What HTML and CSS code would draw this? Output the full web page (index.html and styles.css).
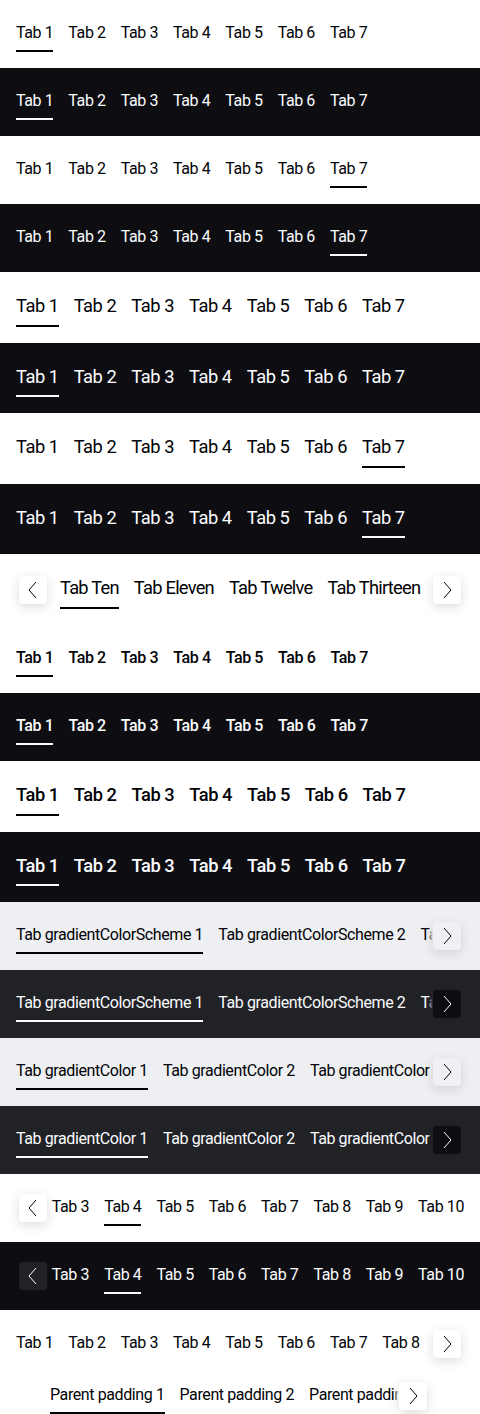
FILE: index.html
```html
<!DOCTYPE html>
<html lang="en">
<head>
<meta charset="utf-8">
<title>Tabs Bar</title>
<link rel="stylesheet" href="styles.css">
</head>
<body>

<!-- small -->
<div class="story theme-light">
  <div class="tabs-bar"><div class="scroller">
    <button class="tab active">Tab 1</button><button class="tab">Tab 2</button><button class="tab">Tab 3</button><button class="tab">Tab 4</button><button class="tab">Tab 5</button><button class="tab">Tab 6</button><button class="tab">Tab 7</button>
  </div></div>
</div>
<div class="story theme-dark">
  <div class="tabs-bar"><div class="scroller">
    <button class="tab active">Tab 1</button><button class="tab">Tab 2</button><button class="tab">Tab 3</button><button class="tab">Tab 4</button><button class="tab">Tab 5</button><button class="tab">Tab 6</button><button class="tab">Tab 7</button>
  </div></div>
</div>
<div class="story theme-light">
  <div class="tabs-bar"><div class="scroller">
    <button class="tab">Tab 1</button><button class="tab">Tab 2</button><button class="tab">Tab 3</button><button class="tab">Tab 4</button><button class="tab">Tab 5</button><button class="tab">Tab 6</button><button class="tab active">Tab 7</button>
  </div></div>
</div>
<div class="story theme-dark">
  <div class="tabs-bar"><div class="scroller">
    <button class="tab">Tab 1</button><button class="tab">Tab 2</button><button class="tab">Tab 3</button><button class="tab">Tab 4</button><button class="tab">Tab 5</button><button class="tab">Tab 6</button><button class="tab active">Tab 7</button>
  </div></div>
</div>

<!-- medium -->
<div class="story theme-light size-medium">
  <div class="tabs-bar"><div class="scroller">
    <button class="tab active">Tab 1</button><button class="tab">Tab 2</button><button class="tab">Tab 3</button><button class="tab">Tab 4</button><button class="tab">Tab 5</button><button class="tab">Tab 6</button><button class="tab">Tab 7</button>
  </div></div>
</div>
<div class="story theme-dark size-medium">
  <div class="tabs-bar"><div class="scroller">
    <button class="tab active">Tab 1</button><button class="tab">Tab 2</button><button class="tab">Tab 3</button><button class="tab">Tab 4</button><button class="tab">Tab 5</button><button class="tab">Tab 6</button><button class="tab">Tab 7</button>
  </div></div>
</div>
<div class="story theme-light size-medium">
  <div class="tabs-bar"><div class="scroller">
    <button class="tab">Tab 1</button><button class="tab">Tab 2</button><button class="tab">Tab 3</button><button class="tab">Tab 4</button><button class="tab">Tab 5</button><button class="tab">Tab 6</button><button class="tab active">Tab 7</button>
  </div></div>
</div>
<div class="story theme-dark size-medium">
  <div class="tabs-bar"><div class="scroller">
    <button class="tab">Tab 1</button><button class="tab">Tab 2</button><button class="tab">Tab 3</button><button class="tab">Tab 4</button><button class="tab">Tab 5</button><button class="tab">Tab 6</button><button class="tab active">Tab 7</button>
  </div></div>
</div>

<!-- scrolling medium -->
<div class="story theme-light size-medium">
  <div class="tabs-bar">
    <div class="scroller scrolled-mid tight">
      <button class="tab active">Tab Ten</button><button class="tab">Tab Eleven</button><button class="tab">Tab Twelve</button><button class="tab">Tab Thirteen</button>
    </div>
    <div class="nav nav-prev"><button class="nav-btn" aria-label="Previous"><svg width="28" height="28" viewBox="0 0 28 28"><path d="M17 6 L10 14 L17 22" fill="none" stroke="currentColor" stroke-width="1"/></svg></button></div>
    <div class="nav nav-next"><button class="nav-btn" aria-label="Next"><svg width="28" height="28" viewBox="0 0 28 28"><path d="M11 6 L18 14 L11 22" fill="none" stroke="currentColor" stroke-width="1"/></svg></button></div>
  </div>
</div>

<!-- semibold small -->
<div class="story theme-light weight-semibold">
  <div class="tabs-bar"><div class="scroller">
    <button class="tab active">Tab 1</button><button class="tab">Tab 2</button><button class="tab">Tab 3</button><button class="tab">Tab 4</button><button class="tab">Tab 5</button><button class="tab">Tab 6</button><button class="tab">Tab 7</button>
  </div></div>
</div>
<div class="story theme-dark weight-semibold">
  <div class="tabs-bar"><div class="scroller">
    <button class="tab active">Tab 1</button><button class="tab">Tab 2</button><button class="tab">Tab 3</button><button class="tab">Tab 4</button><button class="tab">Tab 5</button><button class="tab">Tab 6</button><button class="tab">Tab 7</button>
  </div></div>
</div>
<!-- semibold medium -->
<div class="story theme-light weight-semibold size-medium">
  <div class="tabs-bar"><div class="scroller">
    <button class="tab active">Tab 1</button><button class="tab">Tab 2</button><button class="tab">Tab 3</button><button class="tab">Tab 4</button><button class="tab">Tab 5</button><button class="tab">Tab 6</button><button class="tab">Tab 7</button>
  </div></div>
</div>
<div class="story theme-dark weight-semibold size-medium">
  <div class="tabs-bar"><div class="scroller">
    <button class="tab active">Tab 1</button><button class="tab">Tab 2</button><button class="tab">Tab 3</button><button class="tab">Tab 4</button><button class="tab">Tab 5</button><button class="tab">Tab 6</button><button class="tab">Tab 7</button>
  </div></div>
</div>

<!-- gradient color scheme -->
<div class="story theme-surface-light">
  <div class="tabs-bar">
    <div class="scroller">
      <button class="tab active">Tab gradientColorScheme 1</button><button class="tab">Tab gradientColorScheme 2</button><button class="tab">Tab gradientColorScheme 3</button>
    </div>
    <div class="nav nav-next"><button class="nav-btn" aria-label="Next"><svg width="28" height="28" viewBox="0 0 28 28"><path d="M11 6 L18 14 L11 22" fill="none" stroke="currentColor" stroke-width="1"/></svg></button></div>
  </div>
</div>
<div class="story theme-surface-dark">
  <div class="tabs-bar">
    <div class="scroller">
      <button class="tab active">Tab gradientColorScheme 1</button><button class="tab">Tab gradientColorScheme 2</button><button class="tab">Tab gradientColorScheme 3</button>
    </div>
    <div class="nav nav-next"><button class="nav-btn" aria-label="Next"><svg width="28" height="28" viewBox="0 0 28 28"><path d="M11 6 L18 14 L11 22" fill="none" stroke="currentColor" stroke-width="1"/></svg></button></div>
  </div>
</div>
<div class="story theme-surface-light">
  <div class="tabs-bar">
    <div class="scroller">
      <button class="tab active">Tab gradientColor 1</button><button class="tab">Tab gradientColor 2</button><button class="tab">Tab gradientColor 3</button>
    </div>
    <div class="nav nav-next"><button class="nav-btn" aria-label="Next"><svg width="28" height="28" viewBox="0 0 28 28"><path d="M11 6 L18 14 L11 22" fill="none" stroke="currentColor" stroke-width="1"/></svg></button></div>
  </div>
</div>
<div class="story theme-surface-dark">
  <div class="tabs-bar">
    <div class="scroller">
      <button class="tab active">Tab gradientColor 1</button><button class="tab">Tab gradientColor 2</button><button class="tab">Tab gradientColor 3</button>
    </div>
    <div class="nav nav-next"><button class="nav-btn" aria-label="Next"><svg width="28" height="28" viewBox="0 0 28 28"><path d="M11 6 L18 14 L11 22" fill="none" stroke="currentColor" stroke-width="1"/></svg></button></div>
  </div>
</div>

<!-- scrolled to end -->
<div class="story theme-light">
  <div class="tabs-bar">
    <div class="scroller scrolled-end">
      <button class="tab">Tab 3</button><button class="tab active">Tab 4</button><button class="tab">Tab 5</button><button class="tab">Tab 6</button><button class="tab">Tab 7</button><button class="tab">Tab 8</button><button class="tab">Tab 9</button><button class="tab">Tab 10</button>
    </div>
    <div class="nav nav-prev"><button class="nav-btn" aria-label="Previous"><svg width="28" height="28" viewBox="0 0 28 28"><path d="M17 6 L10 14 L17 22" fill="none" stroke="currentColor" stroke-width="1"/></svg></button></div>
  </div>
</div>
<div class="story theme-dark">
  <div class="tabs-bar">
    <div class="scroller scrolled-end">
      <button class="tab">Tab 3</button><button class="tab active">Tab 4</button><button class="tab">Tab 5</button><button class="tab">Tab 6</button><button class="tab">Tab 7</button><button class="tab">Tab 8</button><button class="tab">Tab 9</button><button class="tab">Tab 10</button>
    </div>
    <div class="nav nav-prev"><button class="nav-btn" aria-label="Previous"><svg width="28" height="28" viewBox="0 0 28 28"><path d="M17 6 L10 14 L17 22" fill="none" stroke="currentColor" stroke-width="1"/></svg></button></div>
  </div>
</div>

<!-- no active -->
<div class="story theme-light">
  <div class="tabs-bar">
    <div class="scroller">
      <button class="tab">Tab 1</button><button class="tab">Tab 2</button><button class="tab">Tab 3</button><button class="tab">Tab 4</button><button class="tab">Tab 5</button><button class="tab">Tab 6</button><button class="tab">Tab 7</button><button class="tab">Tab 8</button>
    </div>
    <div class="nav nav-next"><button class="nav-btn" aria-label="Next"><svg width="28" height="28" viewBox="0 0 28 28"><path d="M11 6 L18 14 L11 22" fill="none" stroke="currentColor" stroke-width="1"/></svg></button></div>
  </div>
</div>

<!-- parent padding -->
<div class="story theme-light parent-padding">
  <div class="tabs-bar">
    <div class="scroller">
      <button class="tab active">Parent padding 1</button><button class="tab">Parent padding 2</button><button class="tab">Parent padding 3</button>
    </div>
    <div class="nav nav-next"><button class="nav-btn" aria-label="Next"><svg width="28" height="28" viewBox="0 0 28 28"><path d="M11 6 L18 14 L11 22" fill="none" stroke="currentColor" stroke-width="1"/></svg></button></div>
  </div>
</div>

</body>
</html>
```

FILE: styles.css
```css
* {
  box-sizing: border-box;
}

html, body {
  margin: 0;
  padding: 0;
}

body {
  font-family: Roboto, "Liberation Sans", Arial, sans-serif;
  background: #ffffff;
  color: #010205;
  width: 480px;
  overflow: hidden;
}

.story {
  padding: 16px;
}

.theme-light {
  --bg: #ffffff;
  --btn-bg: #ffffff;
  --btn-shadow: 0 3px 12px rgba(1, 2, 5, 0.14);
  background: var(--bg);
  color: #010205;
}

.theme-dark {
  --bg: #0e0e12;
  --btn-bg: #212225;
  --btn-shadow: none;
  background: var(--bg);
  color: #fbfcff;
}

.theme-surface-light {
  --bg: #eeeff2;
  --btn-bg: #eff0f3;
  --btn-shadow: 0 3px 12px rgba(1, 2, 5, 0.12);
  background: var(--bg);
  color: #010205;
}

.theme-surface-dark {
  --bg: #212225;
  --btn-bg: #0e0e12;
  --btn-shadow: none;
  background: var(--bg);
  color: #fbfcff;
}

.tabs-bar {
  position: relative;
}

.scroller {
  display: flex;
  gap: 15px;
  overflow: hidden;
  white-space: nowrap;
}

.scrolled-mid {
  padding-left: 44px;
}

.scrolled-end {
  justify-content: flex-end;
}

.tab {
  flex: 0 0 auto;
  margin: 0;
  padding: 5px 0 5px;
  border: 0;
  border-bottom: 2px solid transparent;
  background: none;
  color: inherit;
  font-family: inherit;
  font-size: 16px;
  line-height: 24px;
  font-weight: 400;
  letter-spacing: -0.4px;
  cursor: pointer;
}

.tab.active {
  border-bottom-color: currentColor;
}

.size-medium .tab {
  font-size: 18.3px;
  line-height: 26.6px;
  letter-spacing: -0.45px;
}

.size-medium .tight .tab {
  letter-spacing: -0.75px;
}

.weight-semibold .tab {
  font-weight: 500;
}

.nav {
  position: absolute;
  top: 0;
  bottom: 0;
  width: 36px;
  display: flex;
  align-items: center;
}

.nav-prev {
  left: 0;
  justify-content: flex-start;
  padding-left: 3px;
  background: linear-gradient(to left, transparent 0, var(--bg) 5px);
}

.nav-next {
  right: 0;
  justify-content: flex-end;
  padding-right: 3px;
  background: linear-gradient(to right, transparent 0, var(--bg) 5px);
}

.nav-btn {
  width: 28px;
  height: 28px;
  margin: 0;
  padding: 0;
  border: 0;
  border-radius: 4px;
  display: flex;
  align-items: center;
  justify-content: center;
  background: var(--btn-bg);
  box-shadow: var(--btn-shadow);
  color: inherit;
  cursor: pointer;
}

.nav-btn svg {
  display: block;
}

.parent-padding {
  padding: 0 50px;
}
```
